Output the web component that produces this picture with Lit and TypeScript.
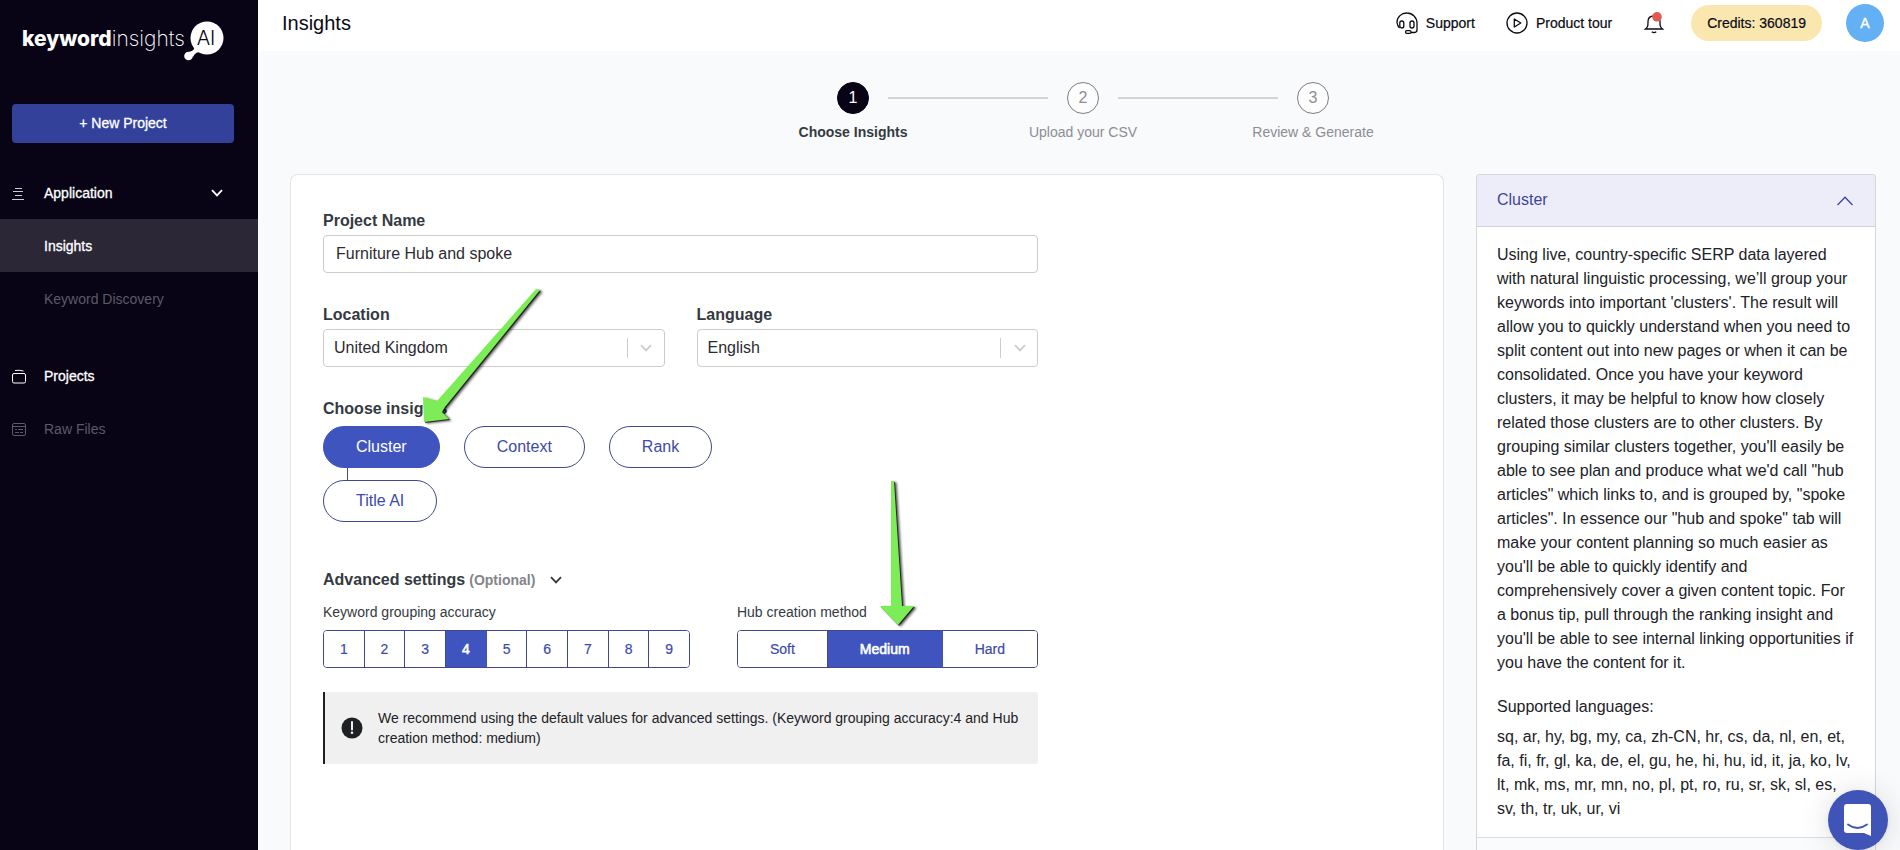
import { LitElement, html, css } from "lit";
import { customElement, state } from "lit/decorators.js";

const chevron = (cls: string) => html`<svg class=${cls} viewBox="0 0 12 8" aria-hidden="true"><path d="M1 1.2 6 6.4 11 1.2" fill="none" stroke="currentColor" stroke-width="1.8"/></svg>`;

@customElement("side-nav")
class SideNav extends LitElement {
  static styles = css`
    :host { display: block; flex: 0 0 258px; background: #080315; color: #fff; font-size: 14px; line-height: 20px; }
    * { box-sizing: border-box; }
    .logo { display: flex; align-items: center; height: 64px; padding: 14px 0 0 22px; }
    .word { font-family: Inter, sans-serif; font-size: 21px; line-height: 28px; font-weight: 200; white-space: nowrap; width: 162px; }
    .word b { font-weight: 800; }
    .bubble { width: 40px; height: 42px; margin-top: 4px; flex: none; }
    .new { display: block; width: 222px; height: 39px; margin: 40px 12px 23px; border: 0; border-radius: 4px; padding: 0 0 2px; background: #34419b; color: #fff; font: 14px/20px "Liberation Sans", sans-serif; -webkit-text-stroke: 0.3px; }
    .item { display: flex; align-items: center; height: 53px; padding-left: 12px; color: #fff; text-decoration: none; -webkit-text-stroke: 0.3px; }
    .icon { width: 14px; height: 16px; margin-right: 18px; flex: none; }
    .label { flex: 1; }
    .open { width: 12px; height: 8px; margin-right: 35px; }
    .sub { padding-left: 44px; }
    .active { background: #2b2737; }
    .dim { color: #5d5a66; -webkit-text-stroke: 0; }
    .group { margin-bottom: 24px; }
  `;
  render() {
    return html`
      <div class="logo">
        <span class="word"><b>keyword</b>insights</span>
        <svg class="bubble" viewBox="0 0 40 42" aria-label="AI">
          <circle cx="23" cy="18" r="16.5" fill="#fff"/>
          <path d="M10 26c1 4-2 5-5 6l4 5c2-4 4-5 8-5z" fill="#fff"/>
          <circle cx="4.500" cy="36" r="4.300" fill="#fff"/>
          <text x="22" y="25" text-anchor="middle" font-family="Inter" font-weight="300" font-size="20" fill="#080315">AI</text>
        </svg>
      </div>
      <button class="new">+ New Project</button>
      <nav>
        <div class="group">
          <a class="item" href="#application">
            <svg class="icon" viewBox="0 0 14 16" stroke="#ccc" fill="none"><path d="M3 3.500h7M1 6.500h10M3 10.500h7M0 14.500h12"/></svg>
            <span class="label">Application</span>${chevron("open")}
          </a>
          <a class="item sub active" href="#insights">Insights</a>
          <a class="item sub dim" href="#discovery">Keyword Discovery</a>
        </div>
        <a class="item" href="#projects">
          <svg class="icon" viewBox="0 0 14 16" stroke="#fff" fill="none"><rect x=".5" y="5.500" width="13" height="9.500" rx="1.500"/><path d="M3 2.500Q7 1.800 11.500 3"/></svg>
          <span class="label">Projects</span>
        </a>
        <a class="item dim" href="#raw">
          <svg class="icon" viewBox="0 0 14 16" stroke="currentColor" fill="none"><rect x=".5" y="2.500" width="13" height="12" rx="1.500"/><path d="M1 5.500h12M3 8.500h2M6 8.500h5M3 11.500h4M8 11.500h3"/></svg>
          <span class="label">Raw Files</span>
        </a>
      </nav>`;
  }
}

@customElement("top-bar")
class TopBar extends LitElement {
  static styles = css`
    :host { display: flex; align-items: center; height: 51px; padding: 0 16px 5px 24px; background: #fff; color: #0a0a14; box-sizing: border-box; font-size: 14px; line-height: 20px; }
    h1 { margin: 0; flex: 1; font-size: 20px; line-height: 28px; font-weight: 400; }
    a, button { display: flex; align-items: center; color: inherit; text-decoration: none; border: 0; background: none; padding: 0; font: inherit; }
    .link { gap: 8px; margin-right: 31px; -webkit-text-stroke: 0.2px; }
    .glyph { width: 22px; height: 22px; }
    .bell { margin-right: 26px; }
    .credits { height: 36px; padding: 0 16px; border-radius: 18px; background: #fae7af; margin-right: 24px; -webkit-text-stroke: 0.2px; }
    .avatar { width: 38px; height: 38px; justify-content: center; border-radius: 50%; background: #64b0f4; color: #fff; -webkit-text-stroke: 0.4px; }
  `;
  render() {
    return html`
      <h1>Insights</h1>
      <a class="link" href="#support">
        <svg class="glyph" viewBox="0 0 22 22" fill="none" stroke="#0a0a14" stroke-width="1.300">
          <path d="M3.500 16A10 10 0 0 1 1 10.500 9.500 9.500 0 0 1 11 1a10 10 0 0 1 10 10v7q0 2.500-3 2.500h-3"/>
          <rect x="3.800" y="9" width="4" height="7" rx="2"/><rect x="14" y="9" width="4" height="7" rx="2"/>
          <rect x="9.500" y="18.700" width="5.500" height="2.600" rx="1.300"/>
        </svg>Support</a>
      <a class="link" href="#tour">
        <svg class="glyph" viewBox="0 0 22 22" fill="none" stroke="#0a0a14" stroke-width="1.300" stroke-linejoin="round"><circle cx="11" cy="11" r="10"/><path d="M8.300 7v8l6.500-4z"/></svg>Product tour</a>
      <button class="bell" aria-label="Notifications">
        <svg class="glyph" viewBox="0 0 22 22"><path d="M2.500 17h17c-2.500-2-2.500-3-2.500-7.500 0-3.500-2.500-5.500-6-5.500s-6 2-6 5.500c0 4.500 0 5.500-2.500 7.500zM8.800 19.700q2.200 1.900 4.400 0" fill="none" stroke="#0a0a14" stroke-width="1.300"/><circle cx="14" cy="4.800" r="4.800" fill="#df5a50"/></svg>
      </button>
      <button class="credits">Credits: 360819</button>
      <button class="avatar">A</button>`;
  }
}

@customElement("step-track")
class StepTrack extends LitElement {
  static styles = css`
    ol { display: flex; justify-content: center; list-style: none; margin: 0; padding: 0; }
    li { position: relative; width: 230px; display: flex; flex-direction: column; align-items: center; gap: 8px; color: #8d8d93; font-size: 14px; line-height: 20px; }
    li + li::before { content: ""; position: absolute; left: -80px; top: 15px; width: 160px; height: 2px; background: #d3d4d6; }
    .dot { width: 32px; height: 32px; box-sizing: border-box; border: 1px solid #7d7d83; border-radius: 50%; display: grid; place-items: center; font-size: 16px; background: #fdfdfe; }
    .current { color: #343a40; font-weight: 700; }
    .current .dot { background: #080315; border-color: #080315; color: #fff; font-weight: 400; }
  `;
  render() {
    return html`<ol>${["Choose Insights", "Upload your CSV", "Review & Generate"].map((t, i) => html`
      <li class=${i === 0 ? "current" : ""}><span class="dot">${i + 1}</span>${t}</li>`)}</ol>`;
  }
}

@customElement("insight-form")
class InsightForm extends LitElement {
  @state() accuracy = 4;
  @state() method = "Medium";
  static styles = css`
    :host { display: block; }
    * { box-sizing: border-box; }
    form { position: relative; max-width: 715px; color: #343a40; font-size: 16px; line-height: 24px; }
    .title { display: block; font-weight: 700; margin-bottom: 2px; }
    .choose { margin-bottom: 5px; }
    input, select { display: block; width: 100%; height: 38px; border: 1px solid #ccc; border-radius: 4px; background: #fff; color: #2c2c30; font: 16px/24px "Liberation Sans", sans-serif; outline: 0; }
    input { padding: 0 12px; }
    select { padding: 0 48px 0 10px; appearance: none; }
    .pair { display: grid; grid-template-columns: 1fr 1fr; gap: 32px; margin: 30px 0; }
    .pick { position: relative; }
    .arrow { position: absolute; right: 0; top: 9px; width: 38px; height: 20px; border-left: 1px solid #ccc; display: grid; place-items: center; color: #ccc; pointer-events: none; }
    .down { width: 12px; height: 8px; }
    .pills { display: flex; gap: 24px; }
    .pill { height: 42px; padding: 0 32px; border: 1px solid #42478f; border-radius: 21px; background: #fff; color: #3d4aa8; font: 16px/24px "Liberation Sans", sans-serif; }
    .on { background: #4054c0; color: #fff; border-color: #4054c0; }
    .stem { width: 1px; height: 12px; margin-left: 24px; background: #42478f; }
    .advanced { display: flex; align-items: center; gap: 4px; margin: 46px 0 10px; padding: 0; border: 0; background: none; color: inherit; font: 700 16px/24px "Liberation Sans", sans-serif; }
    .optional { font-size: 14px; color: #84848a; }
    .toggle { width: 12px; height: 8px; margin-left: 11px; }
    .settings { display: flex; justify-content: space-between; margin-bottom: 24px; font-size: 14px; line-height: 20px; }
    fieldset { border: 0; margin: 0; padding: 0; min-width: 0; }
    legend { padding: 0; margin-bottom: 8px; }
    .segments { display: flex; height: 38px; border: 1px solid #42478f; border-radius: 4px; overflow: hidden; }
    .scale { width: 367px; }
    .seg { flex: 1 1 0; padding: 0; border: 0; border-right: 1px solid #42478f; background: #fff; color: #3d4aa8; font: 14px/20px "Liberation Sans", sans-serif; -webkit-text-stroke: 0.2px; }
    .seg:last-child { border-right: 0; }
    .seg.on { background: #4054c0; color: #fff; border-color: #4054c0; -webkit-text-stroke: 0.6px; }
    .wide { flex: none; padding: 0 32px; }
    .note { display: flex; align-items: center; gap: 15px; min-height: 72px; padding: 16px; border-left: 2px solid #1f2023; border-radius: 0 3px 3px 0; background: #f0f0f0; color: #212226; font-size: 14px; line-height: 20px; }
    .note p { margin: 0; }
    .alert { width: 22px; height: 22px; flex: none; }
    .pointer { position: absolute; pointer-events: none; overflow: visible; filter: drop-shadow(1px 1px 0 #0009) drop-shadow(2px 1px 1px #000a); }
    .to-cluster { left: 100px; top: 79px; width: 120px; height: 136px; }
    .to-method { left: 557px; top: 272px; width: 36px; height: 146px; }
  `;
  render() {
    const seg = (v: string | number, on: boolean, pick: () => void, wide = "") =>
      html`<button type="button" class="seg ${wide} ${on ? "on" : ""}" aria-pressed=${on} @click=${pick}>${v}</button>`;
    return html`<form>
      <label class="title" for="name">Project Name</label>
      <input id="name" value="Furniture Hub and spoke">
      <div class="pair">
        <div><label class="title" for="location">Location</label>
          <div class="pick"><select id="location"><option>United Kingdom</option></select><span class="arrow">${chevron("down")}</span></div></div>
        <div><label class="title" for="language">Language</label>
          <div class="pick"><select id="language"><option>English</option></select><span class="arrow">${chevron("down")}</span></div></div>
      </div>
      <span class="title choose">Choose insights</span>
      <div class="pills">
        <button type="button" class="pill on">Cluster</button>
        <button type="button" class="pill">Context</button>
        <button type="button" class="pill">Rank</button>
      </div>
      <div class="stem"></div>
      <button type="button" class="pill">Title AI</button>
      <button type="button" class="advanced">Advanced settings <span class="optional">(Optional)</span>${chevron("toggle")}</button>
      <div class="settings">
        <fieldset><legend>Keyword grouping accuracy</legend>
          <div class="segments scale">${[1, 2, 3, 4, 5, 6, 7, 8, 9].map((n) => seg(n, n === this.accuracy, () => (this.accuracy = n)))}</div></fieldset>
        <fieldset><legend>Hub creation method</legend>
          <div class="segments">${["Soft", "Medium", "Hard"].map((m) => seg(m, m === this.method, () => (this.method = m), "wide"))}</div></fieldset>
      </div>
      <div class="note">
        <svg class="alert" viewBox="0 0 22 22"><circle cx="11" cy="11" r="10.500" fill="#1f2023"/><path d="M11 5v7.500" stroke="#f0f0f0" stroke-width="2" stroke-linecap="round"/><circle cx="11" cy="15.800" r="1.300" fill="#f0f0f0"/></svg>
        <p>We recommend using the default values for advanced settings. (Keyword grouping accuracy:4 and Hub creation method: medium)</p>
      </div>
      <svg class="pointer to-cluster" viewBox="0 0 120 136"><path d="M113 1 14 113 0 109 1 134 26 131 19 124 22 119 117 2z" fill="#7ded57"/></svg>
      <svg class="pointer to-method" viewBox="0 0 36 146"><path d="M11 0 11 125 0 125 18 144 34 125 22 125 14 0z" fill="#7ded57"/></svg>
    </form>`;
  }
}

@customElement("app-root")
class AppRoot extends LitElement {
  static styles = css`
    :host { display: flex; height: 100vh; overflow: hidden; font-family: "Liberation Sans", Arial, sans-serif; background: #f8fafc; }
    * { box-sizing: border-box; }
    main { flex: 1; min-width: 0; display: flex; flex-direction: column; }
    .page { flex: 1; min-height: 0; display: flex; flex-direction: column; gap: 32px; padding: 31px 24px 0 32px; }
    .columns { flex: 1; min-height: 0; display: grid; grid-template-columns: minmax(0, 1fr) 400px; gap: 32px; }
    .card { border: 1px solid #e3e5e8; border-bottom: 0; border-radius: 8px 8px 0 0; background: #fff; padding: 34px 32px 0; }
    .panel { border: 1px solid #d5d6dc; border-bottom: 0; border-radius: 4px 4px 0 0; overflow: hidden; background: #fff; font-size: 16px; line-height: 24px; color: #212226; }
    .head { display: flex; align-items: center; justify-content: space-between; width: 100%; height: 52px; padding: 0 22px 2px 20px; border: 0; border-bottom: 1px solid #d0d0e0; background: #ededf9; color: #3d4696; font: 16px/24px "Liberation Sans", sans-serif; }
    .up { width: 16px; height: 10px; margin-top: 2px; }
    .body { padding: 16px 20px; border-bottom: 1px solid #dcdde1; }
    .body p { margin: 0 0 20px; }
    .body h2 { margin: 0 0 6px; font-size: 16px; line-height: 24px; font-weight: 400; }
    .body .langs { margin: 0; }
    .next { height: 52px; background: #fafbfc; }
    .chat { position: fixed; right: 12px; bottom: 0; width: 60px; height: 60px; border: 0; border-radius: 50%; padding: 14px 15px; background: #4054b8; box-shadow: 0 1px 6px #0001, 0 2px 32px #0002; }
    .face { display: block; width: 30px; height: 32px; }
  `;
  render() {
    return html`
      <side-nav></side-nav>
      <main>
        <top-bar></top-bar>
        <div class="page">
          <step-track></step-track>
          <div class="columns">
            <section class="card"><insight-form></insight-form></section>
            <aside class="panel">
              <button class="head" aria-expanded="true">Cluster<svg class="up" viewBox="0 0 16 10"><path d="M.5 9 8 1.200 15.500 9" fill="none" stroke="currentColor" stroke-width="1.300"/></svg></button>
              <div class="body">
                <p>Using live, country-specific SERP data layered with natural linguistic processing, we’ll group your keywords into important 'clusters'. The result will allow you to quickly understand when you need to split content out into new pages or when it can be consolidated. Once you have your keyword clusters, it may be helpful to know how closely related those clusters are to other clusters. By grouping similar clusters together, you'll easily be able to see plan and produce what we'd call "hub articles" which links to, and is grouped by, "spoke articles". In essence our "hub and spoke" tab will make your content planning so much easier as you'll be able to quickly identify and comprehensively cover a given content topic. For a bonus tip, pull through the ranking insight and you'll be able to see internal linking opportunities if you have the content for it.</p>
                <h2>Supported languages:</h2>
                <p class="langs">sq, ar, hy, bg, my, ca, zh-CN, hr, cs, da, nl, en, et, fa, fi, fr, gl, ka, de, el, gu, he, hi, hu, id, it, ja, ko, lv, lt, mk, ms, mr, mn, no, pl, pt, ro, ru, sr, sk, sl, es, sv, th, tr, uk, ur, vi</p>
              </div>
              <div class="next"></div>
            </aside>
          </div>
        </div>
      </main>
      <button class="chat" aria-label="Open chat"><svg class="face" viewBox="0 0 30 32"><path d="M4 0h21q3 0 3 3v29l-7-3H4q-3 0-3-3V3q0-3 3-3z" fill="#fff"/><path d="M5 20.500q9.500 7 19 0" fill="none" stroke="#4054b8" stroke-width="1.800" stroke-linecap="round"/></svg></button>`;
  }
}
